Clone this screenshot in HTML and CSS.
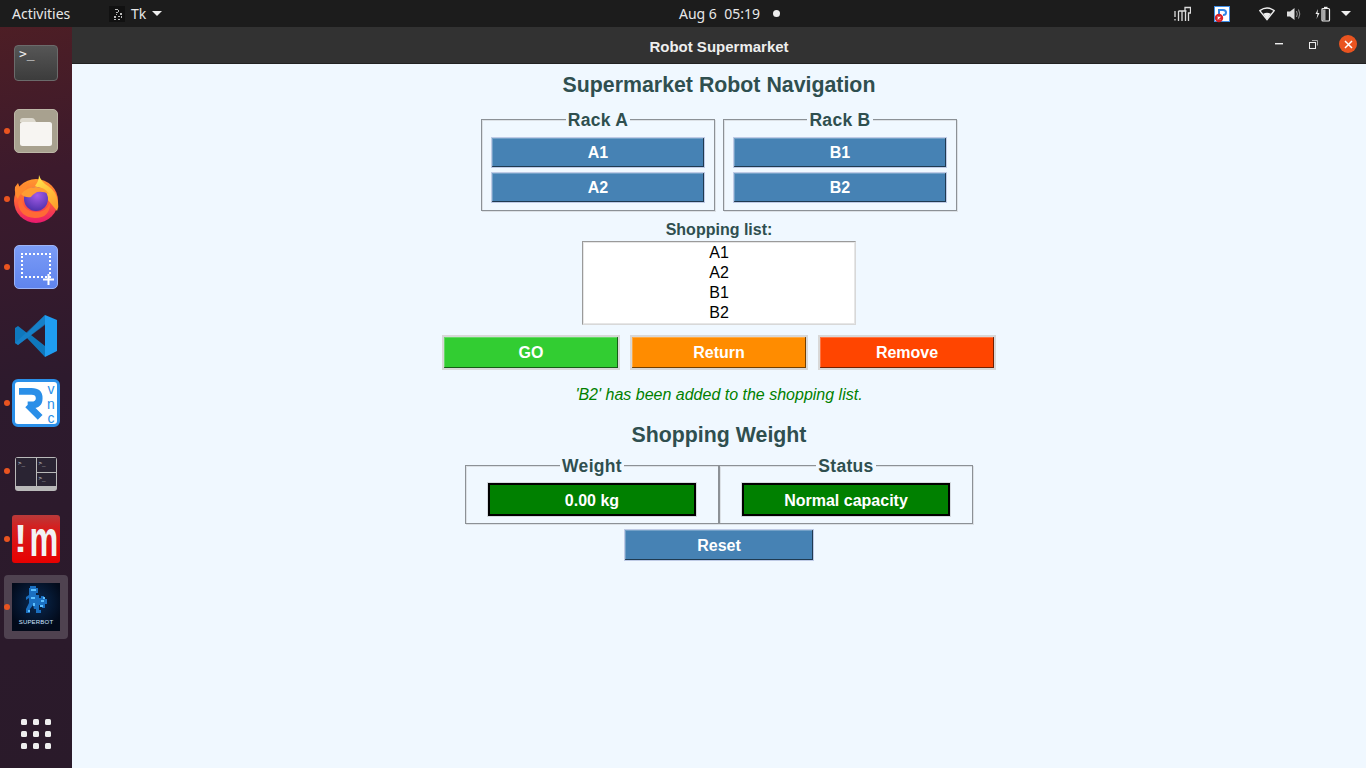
FILE: index.html
```html
<!DOCTYPE html>
<html lang="en">
<head>
    <meta charset="UTF-8">
    <title>Robot Supermarket</title>
    <link rel="stylesheet" href="styles.css">
</head>
<body>
    <header class="topbar">
        <span class="activities">Activities</span>
        <span class="app-menu">
            <svg class="tk-icon" width="16" height="16" viewBox="0 0 16 16"><rect width="16" height="16" fill="#111"/><path d="M6 3h3v1H6zM9 4h1v2H9zM7 6h2v1H7zM7 8h1v1H7zM11 7h2v2h-2zM5 10h2v2H5zM9 10h2v1H9zM12 10h1v2h-1zM5 13h2v1H5zM9 13h2v1H9z" fill="#bbb"/></svg>
            <span class="app-name">Tk</span>
            <i class="caret"></i>
        </span>
        <span class="clock">Aug 6&nbsp; 05:19<i class="clock-dot"></i></span>
        <span class="tray">
            <svg width="17" height="16" viewBox="0 0 17 16" fill="none" stroke="#ddd" stroke-width="1.3"><path d="M1 5v6M1 13v1.500M4.500 5h8M4.500 5v10M8 5v10M11.500 5v10M11 5V1.500h5.500V7h-2v8"/></svg>
            <svg class="tray-vnc" width="16" height="18" viewBox="0 0 16 18"><rect x=".5" y="1.500" width="15" height="15" fill="#fff" stroke="#3f8fe8"/><path d="M5 12V5h4q3 0 3 2.500T9 10" fill="none" stroke="#2f86e8" stroke-width="2"/><circle cx="5" cy="13" r="4.200" fill="#d8232a"/><path d="M3.600 11.600l2.800 2.800M6.400 11.600l-2.800 2.800" stroke="#fff" stroke-width="1.100"/></svg>
            <svg class="tray-wifi" width="16" height="14" viewBox="0 0 16 14" fill="none"><path d="M.8 3.600Q8-1.600 15.200 3.600L8 12.600z" stroke="#eee" stroke-width="1.300"/><path d="M4.200 6.800Q8 4.600 11.800 6.800L8 12.400z" fill="#eee"/></svg>
            <svg class="tray-sound" width="15" height="14" viewBox="0 0 15 14"><path d="M0 4.500h3L7.500 1v12L3 9.500H0z" fill="#ddd"/><path d="M9.500 4q1.600 3 0 6M11.500 2.500q2.600 4.500 0 9" fill="none" stroke="#999" stroke-width="1"/></svg>
            <svg class="tray-power" width="16" height="16" viewBox="0 0 16 16"><path d="M3 3L.5 8h2L1.500 13 4.500 7h-2z" fill="#eee"/><rect x="7" y="2.500" width="7.500" height="12.500" rx="1" fill="none" stroke="#eee" stroke-width="1.200"/><rect x="9" y=".8" width="3.500" height="2" fill="#eee"/><rect x="7.500" y="3.500" width="3" height="11" fill="#aaa"/></svg>
            <i class="caret"></i>
        </span>
    </header>

    <div class="desktop">
        <nav class="dock">
            <div class="dock-item">
                <div class="ico-terminal">&gt;_</div>
            </div>
            <div class="dock-item running">
                <div class="ico-files"><svg width="32" height="29" viewBox="0 0 32 29"><path d="M0 4q0-3 3-3h9q2 0 3 2l1 2H0z" fill="#ddd9ce"/><rect x="0" y="5" width="32" height="24" rx="2.500" fill="#f7f5f2"/></svg></div>
            </div>
            <div class="dock-item running">
                <svg width="46" height="48" viewBox="0 0 46 48">
                    <defs>
                        <linearGradient id="fox" x1="0.5" y1="0" x2="0.5" y2="1"><stop offset="0" stop-color="#ff9a2e"/><stop offset=".55" stop-color="#ff5a3a"/><stop offset="1" stop-color="#e9186f"/></linearGradient>
                        <linearGradient id="flame" x1="0.3" y1="0" x2="0.8" y2="1"><stop offset="0" stop-color="#ffe14a"/><stop offset="1" stop-color="#ff9c2a"/></linearGradient>
                        <radialGradient id="globe" cx=".55" cy=".35" r=".7"><stop offset="0" stop-color="#a45ce8"/><stop offset="1" stop-color="#4a2fa8"/></radialGradient>
                    </defs>
                    <circle cx="23" cy="26" r="22" fill="url(#fox)"/>
                    <path d="M26 0q2 7 9 11 9 6 10 16 1 5-1 9l-9-11Q32 14 22 11 26 6 26 0z" fill="url(#flame)"/>
                    <path d="M2 12l3-4q1 4 3 5 3-4 9-5-3 4-5 8-6 3-7 8-4-5-3-12z" fill="#ff8a2e"/>
                    <circle cx="23" cy="24" r="12" fill="url(#globe)"/>
                    <path d="M8 19q6-7 15-7 9 0 13 7-6-3-12-2-5 3-6 5-6 1-10-3z" fill="#ff9d33"/>
                    <path d="M9 23q0 13 14 14 10 0 14-9 0 15-15 15Q6 42 5 27z" fill="#ff6a35"/>
                </svg>
            </div>
            <div class="dock-item running">
                <div class="ico-shot"><span class="shot-rect"></span><svg class="shot-plus" width="11" height="11" viewBox="0 0 11 11"><path d="M5.500 0v11M0 5.500h11" stroke="#fff" stroke-width="2"/></svg></div>
            </div>
            <div class="dock-item">
                <svg width="44" height="43" viewBox="0 0 44 43">
                    <path d="M31 1L43 6v31l-12 6z" fill="#1f9cf0"/>
                    <path d="M31 1L13 19 4 12 1 14v15l3 2 9-7 18 19 0-11-14-11 14-11z" fill="#0f78bd"/>
                    <path d="M31 1v10L4 31 1 29z" fill="#1b86cf" opacity=".6"/>
                </svg>
            </div>
            <div class="dock-item running">
                <div class="ico-vnc">
                    <svg width="26" height="34" viewBox="0 0 26 34" fill="none" stroke="#2a8fe8" stroke-width="7"><path d="M0 5h13q8 0 8 7t-8 7H9M9 19l13 13"/></svg>
                    <span class="vnc-text">vnc</span>
                </div>
            </div>
            <div class="dock-item running">
                <div class="ico-panes">
                    <div class="pane pane-tall">&gt;_</div>
                    <div class="pane">&gt;_</div>
                    <div class="pane">&gt;_</div>
                </div>
            </div>
            <div class="dock-item running">
                <div class="ico-memo"><span class="memo-bang">!</span><span class="memo-m">m</span></div>
            </div>
            <div class="dock-item running active">
                <div class="ico-superbot">
                    <svg width="30" height="32" viewBox="0 0 26 32"><path d="M7 0h6v2h2v5h-2v2h3v3h2v-2h3v3h3v5h-2v4h-3v-3h-3v5h2v3h-5v-4h-2l-1-4-3 4v4H3v-4l3-6v-5L3 14v-3l3-2V2h1z" fill="#1a6fc0"/><path d="M8 3h5v2H8zM8 11h4v2H8zM18 14h3v2h-3zM10 17h2v3h-2zM17 19h3v2h-3zM5 24h2v2H5zM20 11h2v2h-2z" fill="#5cc0ff"/></svg>
                    <span class="superbot-name">SUPERBOT</span>
                </div>
            </div>
            <div class="dock-item dock-apps">
                <div class="apps-grid"><i></i><i></i><i></i><i></i><i></i><i></i><i></i><i></i><i></i></div>
            </div>
        </nav>

        <div class="window">
            <div class="titlebar">
                <span class="title">Robot Supermarket</span>
                <div class="win-buttons">
                    <svg width="8" height="2" viewBox="0 0 8 2"><rect width="8" height="1.400" fill="#eee"/></svg>
                    <svg class="win-max" width="9" height="9" viewBox="0 0 9 9" fill="none" stroke="#eee"><rect x=".5" y="2.500" width="6" height="6"/><path d="M3 .5h5.500v5" stroke="#aaa"/></svg>
                    <span class="win-close"><svg width="9" height="9" viewBox="0 0 9 9"><path d="M1 1l7 7M8 1L1 8" stroke="#fff" stroke-width="1.500"/></svg></span>
                </div>
            </div>

            <main class="app">
                <h1 class="heading">Supermarket Robot Navigation</h1>

                <div class="racks">
                    <fieldset class="frame rack">
                        <legend>Rack A</legend>
                        <button class="btn btn-rack">A1</button>
                        <button class="btn btn-rack">A2</button>
                    </fieldset>
                    <fieldset class="frame rack">
                        <legend>Rack B</legend>
                        <button class="btn btn-rack">B1</button>
                        <button class="btn btn-rack">B2</button>
                    </fieldset>
                </div>

                <div class="list-label">Shopping list:</div>
                <div class="listbox">
                    <div>A1</div>
                    <div>A2</div>
                    <div>B1</div>
                    <div>B2</div>
                </div>

                <div class="actions">
                    <button class="btn btn-action btn-go">GO</button>
                    <button class="btn btn-action btn-return">Return</button>
                    <button class="btn btn-action btn-remove">Remove</button>
                </div>

                <p class="status-msg">'B2' has been added to the shopping list.</p>

                <h2 class="heading heading-weight">Shopping Weight</h2>

                <div class="readouts">
                    <fieldset class="frame readout">
                        <legend>Weight</legend>
                        <div class="value">0.00 kg</div>
                    </fieldset>
                    <fieldset class="frame readout">
                        <legend>Status</legend>
                        <div class="value">Normal capacity</div>
                    </fieldset>
                </div>

                <button class="btn btn-reset">Reset</button>
            </main>
        </div>
    </div>
</body>
</html>
```

FILE: styles.css
```css
* {
    box-sizing: border-box;
}
body {
    margin: 0;
    height: 768px;
    overflow: hidden;
    display: flex;
    flex-direction: column;
    font-family: "Liberation Sans", Arial, sans-serif;
    background: #2c1a2c;
}

/* top bar */
.topbar {
    height: 27px;
    flex: none;
    display: flex;
    align-items: center;
    padding-left: 12px;
    background: #1c1c1c;
    color: #e8e8e8;
    font-family: "Noto Sans", "Open Sans", sans-serif;
    font-size: 14px;
}
.activities {
    width: 97px;
}
.app-menu {
    display: flex;
    align-items: center;
    width: 570px;
}
.tk-icon {
    margin-right: 6px;
}
.app-name {
    margin-right: 6px;
}
.caret {
    display: inline-block;
    width: 0;
    height: 0;
    border-left: 5px solid transparent;
    border-right: 5px solid transparent;
    border-top: 5px solid #eee;
}
.clock {
    display: flex;
    align-items: center;
    width: 495px;
    white-space: nowrap;
}
.clock-dot {
    width: 7px;
    height: 7px;
    margin-left: 13px;
    border-radius: 50%;
    background: #eee;
}
.tray {
    display: flex;
    align-items: center;
}
.tray-vnc {
    margin-left: 23px;
}
.tray-wifi {
    margin-left: 29px;
}
.tray-sound {
    margin-left: 12px;
}
.tray-power {
    margin-left: 13px;
}
.tray .caret {
    margin-left: 10px;
}

.desktop {
    flex: 1;
    display: flex;
    min-height: 0;
}

/* dock */
.dock {
    width: 72px;
    flex: none;
    display: flex;
    flex-direction: column;
    padding: 2px 4px 0;
    background: linear-gradient(170deg, #4d1e25 0%, #3c1a2c 20%, #2d1a2d 48%, #2a1a2a 100%);
}
.dock-item {
    position: relative;
    height: 68px;
    flex: none;
    display: flex;
    align-items: center;
    justify-content: center;
}
.dock-item.running::before {
    content: "";
    position: absolute;
    left: 0;
    top: 31px;
    width: 6px;
    height: 6px;
    border-radius: 50%;
    background: #e95420;
    z-index: 1;
}
.dock-item.active::after {
    content: "";
    position: absolute;
    inset: 2px 0;
    border-radius: 4px;
    background: #4f4250;
}
.dock-apps {
    margin-top: auto;
}
.ico-terminal {
    width: 44px;
    height: 36px;
    padding: 0 0 0 4px;
    border: 1px solid #6b6b6b;
    border-radius: 4px;
    background: linear-gradient(#565656, #3c3c3c);
    color: #eee;
    font-family: "DejaVu Sans Mono", monospace;
    font-size: 13px;
    line-height: 16px;
}
.ico-files {
    width: 44px;
    height: 44px;
    display: flex;
    align-items: center;
    justify-content: center;
    border-radius: 5px;
    background: #a8a18f;
    border: 1px solid #bdb7a7;
}
.ico-shot {
    position: relative;
    width: 44px;
    height: 44px;
    border-radius: 5px;
    background: linear-gradient(#7b9cf6, #5f84ee);
    border: 1px solid #9db4f7;
}
.shot-rect {
    position: absolute;
    left: 6px;
    top: 7px;
    width: 30px;
    height: 25px;
    border: 2px dotted #fff;
}
.shot-plus {
    position: absolute;
    right: 3px;
    bottom: 3px;
}
.ico-vnc {
    width: 48px;
    height: 48px;
    display: flex;
    align-items: center;
    padding: 0 0 0 4px;
    border: 3px solid #2a8fe8;
    border-radius: 6px;
    background: #fff;
}
.vnc-text {
    display: block;
    width: 12px;
    margin-left: 1px;
    writing-mode: vertical-rl;
    text-orientation: upright;
    color: #2a8fe8;
    font-size: 14px;
    line-height: 12px;
    letter-spacing: -1.5px;
}
.ico-panes {
    width: 42px;
    height: 34px;
    margin-top: 6px;
    display: grid;
    grid-template-columns: 1fr 1fr;
    grid-template-rows: 1fr 1fr;
    gap: 1px;
    padding: 1px 1px 5px;
    border-radius: 3px;
    background: #b9b9b9;
}
.pane {
    background: #2a2433;
    color: #ddd;
    font-family: "DejaVu Sans Mono", monospace;
    font-size: 6px;
    line-height: 9px;
    padding-left: 2px;
}
.pane-tall {
    grid-row: span 2;
}
.ico-memo {
    width: 48px;
    height: 48px;
    display: flex;
    align-items: center;
    justify-content: center;
    gap: 3px;
    border-radius: 3px;
    background: linear-gradient(#b83a3a 0%, #d42020 25%, #e80000 100%);
    color: #f2f2f2;
    font-weight: bold;
    line-height: 46px;
}
.memo-bang {
    font-size: 38px;
}
.memo-m {
    display: block;
    font-size: 36px;
    transform: scale(.9, 1.4);
    margin: 0 -2px;
}
.ico-superbot {
    position: relative;
    z-index: 1;
    width: 48px;
    height: 48px;
    display: flex;
    flex-direction: column;
    align-items: center;
    padding-top: 3px;
    background: radial-gradient(circle at 50% 40%, #0a2a52, #020a1a 75%);
}
.superbot-name {
    color: #cfe6ff;
    font-size: 6px;
    line-height: 9px;
    letter-spacing: .2px;
}
.apps-grid {
    display: grid;
    grid-template-columns: repeat(3, 6px);
    gap: 6px;
}
.apps-grid i {
    height: 6px;
    border-radius: 1.5px;
    background: #eee;
}

/* window */
.window {
    flex: 1;
    display: flex;
    flex-direction: column;
    min-width: 0;
}
.titlebar {
    position: relative;
    height: 37px;
    flex: none;
    display: flex;
    align-items: center;
    justify-content: center;
    padding-top: 2px;
    background: #323232;
    border-bottom: 1px solid #222;
    color: #eee;
    font-size: 15px;
    font-weight: bold;
}
.win-buttons {
    position: absolute;
    right: 9px;
    top: 8px;
    display: flex;
    align-items: center;
}
.win-max {
    margin-left: 26px;
}
.win-close {
    width: 18px;
    height: 18px;
    margin-left: 21px;
    display: flex;
    align-items: center;
    justify-content: center;
    border-radius: 50%;
    background: #e95420;
}

/* app */
.app {
    flex: 1;
    display: flex;
    flex-direction: column;
    align-items: center;
    padding-top: 8px;
    background: #f0f8ff;
}
.heading {
    margin: 0;
    color: #2f4f4f;
    font-size: 21.33px;
    font-weight: bold;
    line-height: 26px;
}
.racks {
    display: flex;
    gap: 8px;
    margin-top: 11px;
}
.frame {
    margin: 0;
    border: 1px solid #8c9196;
    box-shadow: 1px 1px 0 #dce1e6, inset 1px 1px 0 #dce1e6;
}
.frame legend {
    margin: 0 auto;
    padding: 0 2px;
    background: #f0f8ff;
    color: #2f4f4f;
    font-size: 17.5px;
    font-weight: bold;
    line-height: 21px;
    letter-spacing: .3px;
    transform: translateY(1px);
}
.rack {
    width: 234px;
    height: 102px;
    display: flex;
    flex-direction: column;
    gap: 4px;
    padding: 7px 9px 0;
}
.btn {
    display: block;
    padding: 0;
    border: 1px solid #bfcbe6;
    color: #fff;
    font-family: inherit;
    font-size: 16px;
    font-weight: bold;
    box-shadow: inset -1px -1px 0 rgba(0, 0, 0, .55), inset 1px 1px 0 rgba(255, 255, 255, .25);
}
.btn-rack {
    flex: none;
    width: 214px;
    height: 31px;
    background: #4682b4;
}
.list-label {
    margin-top: 9px;
    color: #2f4f4f;
    font-size: 16px;
    font-weight: bold;
    line-height: 19px;
}
.listbox {
    width: 274px;
    height: 84px;
    margin-top: 2px;
    padding-top: 1px;
    border: 1px solid #d8d8d8;
    border-top-color: #9a9a9a;
    border-left-color: #9a9a9a;
    box-shadow: inset 0 0 0 1px #e6e6e6;
    background: #fff;
    color: #000;
    font-size: 16px;
    line-height: 20px;
    text-align: center;
}
.actions {
    display: flex;
    gap: 10px;
    margin-top: 10px;
}
.btn-action {
    width: 178px;
    height: 35px;
    border: 2px solid #d8d8d8;
}
.btn-go {
    background: #32cd32;
}
.btn-return {
    background: #ff8c00;
}
.btn-remove {
    background: #ff4500;
}
.status-msg {
    margin: 15px 0 0;
    color: #008000;
    font-size: 16px;
    font-style: italic;
    line-height: 20px;
}
.heading-weight {
    margin-top: 17px;
}
.readouts {
    display: flex;
    margin-top: 7px;
}
.readout {
    width: 254px;
    height: 69px;
    display: flex;
    justify-content: center;
    padding: 7px 0 0;
}
.value {
    width: 208px;
    height: 33px;
    border: 2px solid #000;
    outline: 1px solid #d5dae0;
    background: #008000;
    color: #fff;
    font-size: 16px;
    font-weight: bold;
    line-height: 31px;
    text-align: center;
}
.btn-reset {
    width: 190px;
    height: 32px;
    margin-top: 5px;
    padding-top: 2px;
    background: #4682b4;
}
```
